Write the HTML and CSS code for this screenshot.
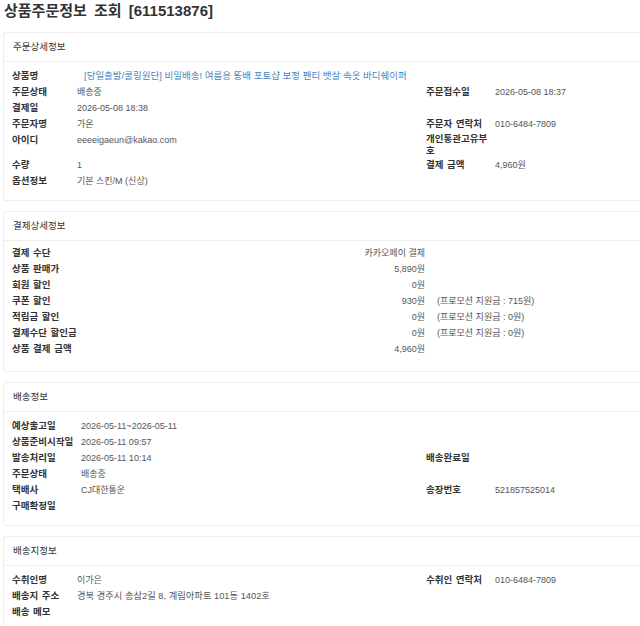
FILE: index.html
```html
<!DOCTYPE html>
<html lang="ko">
<head>
<meta charset="utf-8">
<title>상품주문정보 조회</title>
<link rel="stylesheet" href="styles.css">
</head>
<body>
<h1 class="title">상품주문정보 조회 [611513876]</h1>

<section class="card">
  <div class="card-head">주문상세정보</div>
  <div class="card-body grid cols-a">
    <div class="lb">상품명</div>
    <div class="val span3"><a class="link" href="#">[당일출발/쿨링원단] 비밀배송! 여름용 똥배 포토샵 보정 팬티 뱃살 속옷 바디쉐이퍼</a></div>
    <div class="lb">주문상태</div><div class="val">배송중</div><div class="lb">주문접수일</div><div class="val">2026-05-08 18:37</div>
    <div class="lb">결제일</div><div class="val">2026-05-08 18:38</div><div></div><div></div>
    <div class="lb">주문자명</div><div class="val">가온</div><div class="lb">주문자 연락처</div><div class="val">010-6484-7809</div>
    <div class="lb">아이디</div><div class="val">eeeeigaeun@kakao.com</div><div class="lb wrap">개인통관고유부호</div><div class="val"></div>
    <div class="lb">수량</div><div class="val">1</div><div class="lb">결제 금액</div><div class="val">4,960원</div>
    <div class="lb">옵션정보</div><div class="val">기본 스킨/M (신상)</div><div></div><div></div>
  </div>
</section>

<section class="card">
  <div class="card-head">결제상세정보</div>
  <div class="card-body grid cols-pay">
    <div class="lb">결제 수단</div><div class="amt">카카오페이 결제</div><div class="promo"></div>
    <div class="lb">상품 판매가</div><div class="amt">5,890원</div><div class="promo"></div>
    <div class="lb">회원 할인</div><div class="amt">0원</div><div class="promo"></div>
    <div class="lb">쿠폰 할인</div><div class="amt">930원</div><div class="promo">(프로모션 지원금 : 715원)</div>
    <div class="lb">적립금 할인</div><div class="amt">0원</div><div class="promo">(프로모션 지원금 : 0원)</div>
    <div class="lb">결제수단 할인금</div><div class="amt">0원</div><div class="promo">(프로모션 지원금 : 0원)</div>
    <div class="lb">상품 결제 금액</div><div class="amt">4,960원</div><div class="promo"></div>
  </div>
</section>

<section class="card">
  <div class="card-head">배송정보</div>
  <div class="card-body grid cols-b">
    <div class="lb">예상출고일</div><div class="val">2026-05-11~2026-05-11</div><div></div><div></div>
    <div class="lb">상품준비시작일</div><div class="val">2026-05-11 09:57</div><div></div><div></div>
    <div class="lb">발송처리일</div><div class="val">2026-05-11 10:14</div><div class="lb">배송완료일</div><div class="val"></div>
    <div class="lb">주문상태</div><div class="val">배송중</div><div></div><div></div>
    <div class="lb">택배사</div><div class="val">CJ대한통운</div><div class="lb">송장번호</div><div class="val">521857525014</div>
    <div class="lb">구매확정일</div><div class="val"></div><div></div><div></div>
  </div>
</section>

<section class="card">
  <div class="card-head">배송지정보</div>
  <div class="card-body grid cols-a">
    <div class="lb">수취인명</div><div class="val">이가은</div><div class="lb">수취인 연락처</div><div class="val">010-6484-7809</div>
    <div class="lb">배송지 주소</div><div class="val kr">경북 경주시 송삼2길 8, 계림아파트 101동 1402호</div><div></div><div></div>
    <div class="lb">배송 메모</div><div class="val"></div><div></div><div></div>
  </div>
</section>
</body>
</html>
```

FILE: styles.css
```css
html, body {
  margin: 0;
  padding: 0;
  overflow: hidden;
  background: #ffffff;
}

body {
  font-family: "Liberation Sans", "Noto Sans CJK KR", sans-serif;
  font-size: 9px;
  color: #555555;
  width: 700px;
}

.title {
  margin: 0 0 10px 0;
  padding-left: 4px;
  font-size: 15px;
  line-height: 22px;
  font-weight: 700;
  color: #333333;
  word-spacing: 3px;
}

.card {
  margin: 0 0 10px 3px;
  border: 1px solid #eeeeee;
  border-radius: 3px;
  background: #ffffff;
}

.card-head {
  height: 28px;
  line-height: 28px;
  padding-left: 9px;
  border-bottom: 1px solid #eeeeee;
  color: #333333;
  font-size: 9.5px;
}

.card-body {
  padding: 6px 8px 11px 8px;
}

.grid {
  display: grid;
  grid-auto-rows: minmax(16px, auto);
  line-height: 16px;
}

.cols-a {
  grid-template-columns: 65px 349px 69px 1fr;
}

.cols-b {
  grid-template-columns: 69px 345px 69px 1fr;
}

.cols-pay {
  grid-template-columns: 343px 70px 1fr;
  padding-top: 4px;
  padding-bottom: 14px;
}

.lb {
  color: #333333;
  font-weight: 700;
  font-size: 9.5px;
  white-space: nowrap;
  word-spacing: 1px;
}

.lb.wrap {
  white-space: normal;
  word-break: break-all;
  line-height: 12px;
  padding-top: 1px;
  max-width: 65px;
}

.val {
  color: #555555;
  white-space: nowrap;
}

.val.kr {
  font-size: 9.3px;
}

.span3 {
  grid-column: span 3;
  padding-left: 7px;
}

.link {
  color: #4a86c2;
  text-decoration: none;
  font-size: 9.5px;
}

.amt {
  text-align: right;
  color: #555555;
  white-space: nowrap;
}

.promo {
  padding-left: 12px;
  color: #555555;
  white-space: nowrap;
}
```
